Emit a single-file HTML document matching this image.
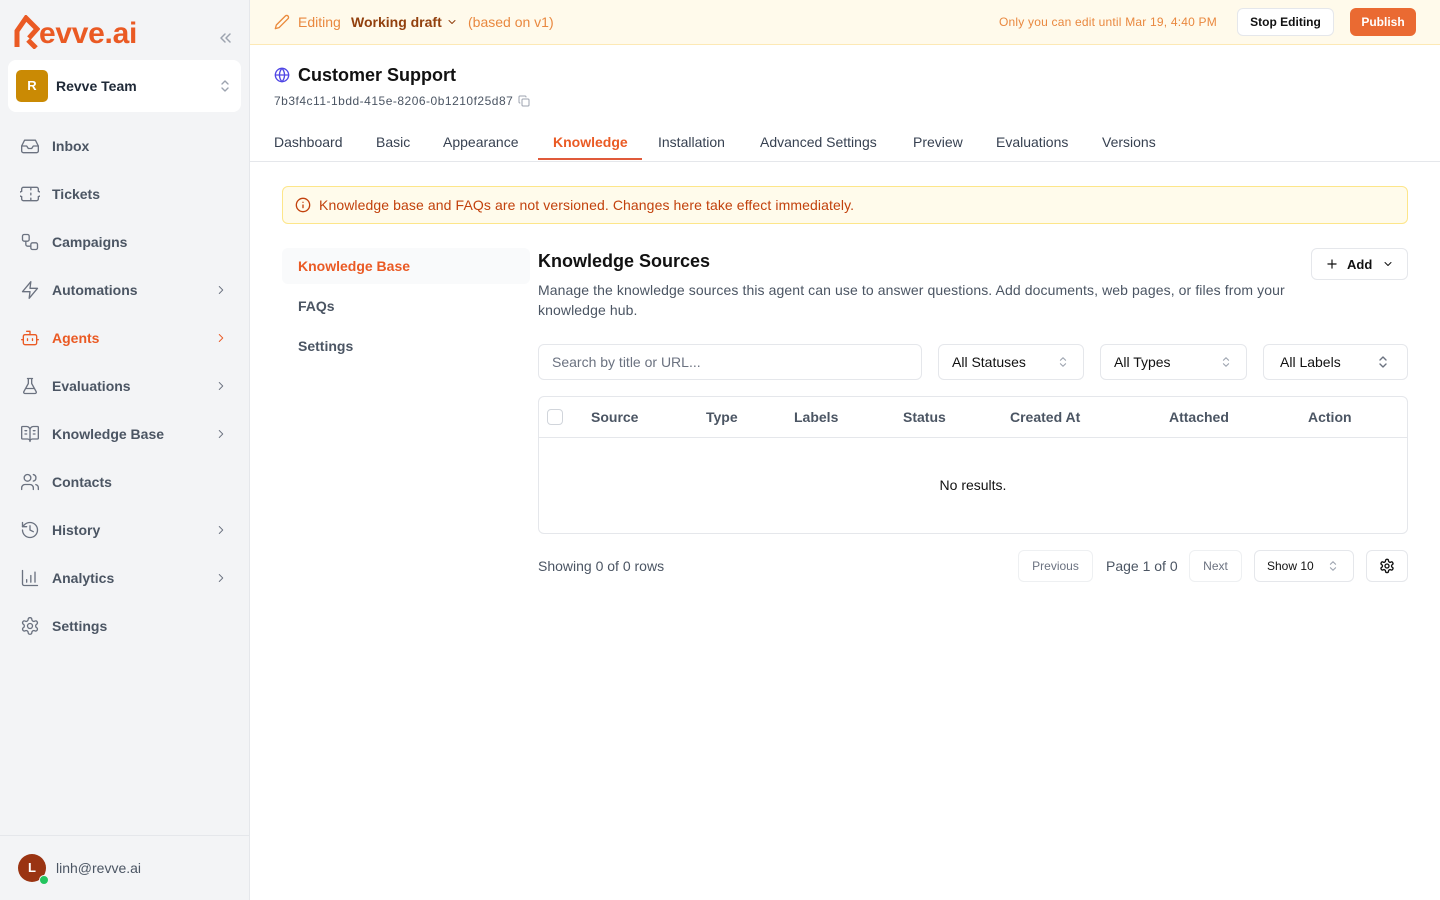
<!DOCTYPE html>
<html><head><meta charset="utf-8"><style>
*{box-sizing:border-box;margin:0;padding:0}
body{width:1440px;height:900px;overflow:hidden;font-family:"Liberation Sans",sans-serif;background:#fff;position:relative;color:#111827}
.a{position:absolute}
.sb{left:0;top:0;width:250px;height:900px;background:#f3f4f6;border-right:1px solid #e5e7eb}
.nav{left:20px;width:212px;height:24px;display:flex;align-items:center;font-size:14px;font-weight:bold;color:#4b5563}
.nav svg{width:20px;height:20px;margin-right:12px;fill:none;stroke:#6b7280;stroke-width:1.6;stroke-linecap:round;stroke-linejoin:round}
.nav .ch{position:absolute;right:4px;width:14px;height:14px;margin:0}
.tab{top:134px;font-size:14px;color:#374151}
.btn{border:1px solid #e5e7eb;border-radius:6px;background:#fff;display:flex;align-items:center;font-size:14px}
.th{top:409px;font-size:14px;color:#4b5563;font-weight:bold}
svg.i{fill:none;stroke-linecap:round;stroke-linejoin:round}
</style></head><body>
<div class="a sb"></div>
<div class="a" style="left:15px;top:17px;font-size:30px;font-weight:bold;color:#ea5a24;letter-spacing:-0.3px">
<span style="display:inline-block;width:24px"></span>evve.ai</div>
<svg class="a" style="left:14px;top:15px" width="26" height="34" viewBox="0 0 26 34"><path d="M3 32V16l9-13 11 11-8 9" fill="none" stroke="#ea5a24" stroke-width="5" stroke-linejoin="miter"/><path d="M14 25l8 8" stroke="#ea5a24" stroke-width="5"/></svg>
<svg class="a i" style="left:218px;top:31px" width="14" height="14" viewBox="0 0 14 14" stroke="#9ca3af" stroke-width="1.5"><path d="M7 3L3 7l4 4M12 3L8 7l4 4"/></svg>
<div class="a" style="left:8px;top:60px;width:233px;height:52px;background:#fff;border-radius:8px"></div>
<div class="a" style="left:16px;top:70px;width:32px;height:32px;background:#ca8a04;border-radius:5px;color:#fff;font-weight:bold;font-size:13px;text-align:center;line-height:32px">R</div>
<div class="a" style="left:56px;top:78px;font-size:14px;font-weight:bold;color:#1f2937">Revve Team</div>
<svg class="a i" style="left:218px;top:78px" width="14" height="16" viewBox="0 0 14 16" stroke="#9ca3af" stroke-width="1.4"><path d="M4 6l3-3 3 3M4 10l3 3 3-3"/></svg>

<div class="a nav" style="top:134px"><svg viewBox="0 0 24 24"><path d="M22 12h-6l-2 3h-4l-2-3H2"/><path d="M5.5 5h13L22 12v6a2 2 0 0 1-2 2H4a2 2 0 0 1-2-2v-6z"/></svg>Inbox</div>
<div class="a nav" style="top:182px"><svg viewBox="0 0 24 24"><path d="M2 9a3 3 0 0 0 0 6v3a2 2 0 0 0 2 2h16a2 2 0 0 0 2-2v-3a3 3 0 0 0 0-6V6a2 2 0 0 0-2-2H4a2 2 0 0 0-2 2z"/><path d="M13 5v2M13 11v2M13 17v2"/></svg>Tickets</div>
<div class="a nav" style="top:230px"><svg viewBox="0 0 24 24"><rect x="3" y="3" width="8" height="8" rx="2"/><rect x="13" y="13" width="8" height="8" rx="2"/><path d="M7 11v4a2 2 0 0 0 2 2h4"/></svg>Campaigns</div>
<div class="a nav" style="top:278px"><svg viewBox="0 0 24 24"><path d="M13 2L3 14h9l-1 8 10-12h-9z"/></svg>Automations<svg class="ch" viewBox="0 0 24 24"><path d="M9 6l6 6-6 6"/></svg></div>
<div class="a nav" style="top:326px;color:#ea5a24"><svg viewBox="0 0 24 24" style="stroke:#ea5a24"><path d="M12 8V4H8"/><rect x="4" y="8" width="16" height="12" rx="2"/><path d="M2 14h2M20 14h2M15 13v2M9 13v2"/></svg>Agents<svg class="ch" viewBox="0 0 24 24" style="stroke:#ea5a24"><path d="M9 6l6 6-6 6"/></svg></div>
<div class="a nav" style="top:374px"><svg viewBox="0 0 24 24"><path d="M9 3h6M10 3v6L4.5 19a1.5 1.5 0 0 0 1.3 2h12.4a1.5 1.5 0 0 0 1.3-2L14 9V3M7 15h10"/></svg>Evaluations<svg class="ch" viewBox="0 0 24 24"><path d="M9 6l6 6-6 6"/></svg></div>
<div class="a nav" style="top:422px"><svg viewBox="0 0 24 24"><path d="M12 7v14M3 18a1 1 0 0 1-1-1V4a1 1 0 0 1 1-1h5a4 4 0 0 1 4 4 4 4 0 0 1 4-4h5a1 1 0 0 1 1 1v13a1 1 0 0 1-1 1h-6a3 3 0 0 0-3 3 3 3 0 0 0-3-3z"/><path d="M16 8h2M16 12h2M6 8h2M6 12h2"/></svg>Knowledge Base<svg class="ch" viewBox="0 0 24 24"><path d="M9 6l6 6-6 6"/></svg></div>
<div class="a nav" style="top:470px"><svg viewBox="0 0 24 24"><path d="M16 21v-2a4 4 0 0 0-4-4H6a4 4 0 0 0-4 4v2"/><circle cx="9" cy="7" r="4"/><path d="M22 21v-2a4 4 0 0 0-3-3.9M16 3.1a4 4 0 0 1 0 7.8"/></svg>Contacts</div>
<div class="a nav" style="top:518px"><svg viewBox="0 0 24 24"><path d="M3 12a9 9 0 1 0 9-9 9.8 9.8 0 0 0-6.7 2.7L3 8"/><path d="M3 3v5h5M12 7v5l4 2"/></svg>History<svg class="ch" viewBox="0 0 24 24"><path d="M9 6l6 6-6 6"/></svg></div>
<div class="a nav" style="top:566px"><svg viewBox="0 0 24 24"><path d="M3 3v16a2 2 0 0 0 2 2h16M8 17v-3M13 17V9M18 17V5"/></svg>Analytics<svg class="ch" viewBox="0 0 24 24"><path d="M9 6l6 6-6 6"/></svg></div>
<div class="a nav" style="top:614px"><svg viewBox="0 0 24 24"><path d="M12.2 2h-.4a2 2 0 0 0-2 2v.2a2 2 0 0 1-1 1.7l-.4.3a2 2 0 0 1-2 0l-.2-.1a2 2 0 0 0-2.7.7l-.2.4a2 2 0 0 0 .7 2.7l.2.1a2 2 0 0 1 1 1.7v.5a2 2 0 0 1-1 1.7l-.2.1a2 2 0 0 0-.7 2.7l.2.4a2 2 0 0 0 2.7.7l.2-.1a2 2 0 0 1 2 0l.4.3a2 2 0 0 1 1 1.7v.2a2 2 0 0 0 2 2h.4a2 2 0 0 0 2-2v-.2a2 2 0 0 1 1-1.7l.4-.3a2 2 0 0 1 2 0l.2.1a2 2 0 0 0 2.7-.7l.2-.4a2 2 0 0 0-.7-2.7l-.2-.1a2 2 0 0 1-1-1.7v-.5a2 2 0 0 1 1-1.7l.2-.1a2 2 0 0 0 .7-2.7l-.2-.4a2 2 0 0 0-2.7-.7l-.2.1a2 2 0 0 1-2 0l-.4-.3a2 2 0 0 1-1-1.7V4a2 2 0 0 0-2-2z"/><circle cx="12" cy="12" r="3"/></svg>Settings</div>

<div class="a" style="left:0;top:835px;width:249px;border-top:1px solid #e5e7eb"></div>
<div class="a" style="left:18px;top:854px;width:28px;height:28px;border-radius:50%;background:#9a3412;color:#fff;font-weight:bold;font-size:13px;text-align:center;line-height:28px">L</div>
<div class="a" style="left:39px;top:875px;width:10px;height:10px;border-radius:50%;background:#22c55e;border:1.5px solid #f3f4f6"></div>
<div class="a" style="left:56px;top:860px;font-size:14px;color:#4b5563">linh@revve.ai</div>

<div class="a" style="left:250px;top:0;width:1190px;height:45px;background:#fffaeb;border-bottom:1px solid #fde9b5"></div>
<svg class="a i" style="left:274px;top:14px" width="16" height="16" viewBox="0 0 24 24" stroke="#ea8a3c" stroke-width="2"><path d="M17 3a2.8 2.8 0 1 1 4 4L7.5 20.5 2 22l1.5-5.5z"/></svg>
<div class="a" style="left:298px;top:14px;font-size:14px;color:#e9883f">Editing</div>
<div class="a" style="left:351px;top:14px;font-size:14px;color:#92400e;font-weight:bold">Working draft</div>
<svg class="a i" style="left:446px;top:16px" width="12" height="12" viewBox="0 0 24 24" stroke="#92400e" stroke-width="2"><path d="M6 9l6 6 6-6"/></svg>
<div class="a" style="left:468px;top:14px;font-size:14px;color:#e9883f">(based on v1)</div>
<div class="a" style="left:999px;top:15px;font-size:12px;color:#e9883f;letter-spacing:0.2px">Only you can edit until Mar 19, 4:40 PM</div>
<div class="a btn" style="left:1237px;top:8px;width:97px;height:28px;justify-content:center;font-size:12px;font-weight:bold;color:#111">Stop Editing</div>
<div class="a" style="left:1350px;top:8px;width:66px;height:28px;border-radius:6px;background:#ea6a32;color:#fff;font-size:12px;font-weight:bold;text-align:center;line-height:28px">Publish</div>

<svg class="a i" style="left:274px;top:67px" width="16" height="16" viewBox="0 0 24 24" stroke="#4f46e5" stroke-width="2"><circle cx="12" cy="12" r="10"/><path d="M2 12h20M12 2a15 15 0 0 1 0 20 15 15 0 0 1 0-20"/></svg>
<div class="a" style="left:298px;top:65px;font-size:18px;font-weight:bold;color:#111">Customer Support</div>
<div class="a" style="left:274px;top:94px;font-size:12px;color:#4b5563;letter-spacing:0.5px">7b3f4c11-1bdd-415e-8206-0b1210f25d87</div>
<svg class="a i" style="left:518px;top:95px" width="12" height="12" viewBox="0 0 24 24" stroke="#9ca3af" stroke-width="2"><rect x="8" y="8" width="14" height="14" rx="2"/><path d="M4 16a2 2 0 0 1-2-2V4a2 2 0 0 1 2-2h10a2 2 0 0 1 2 2"/></svg>

<div class="a tab" style="left:274px">Dashboard</div>
<div class="a tab" style="left:376px">Basic</div>
<div class="a tab" style="left:443px">Appearance</div>
<div class="a tab" style="left:553px;color:#ea5a24;font-weight:bold">Knowledge</div>
<div class="a tab" style="left:658px">Installation</div>
<div class="a tab" style="left:760px">Advanced Settings</div>
<div class="a tab" style="left:913px">Preview</div>
<div class="a tab" style="left:996px">Evaluations</div>
<div class="a tab" style="left:1102px">Versions</div>
<div class="a" style="left:250px;top:161px;width:1190px;border-top:1px solid #e5e7eb"></div>
<div class="a" style="left:538px;top:158px;width:104px;height:2px;background:#e05a3a"></div>

<div class="a" style="left:282px;top:186px;width:1126px;height:38px;background:#fffbeb;border:1px solid #fde68a;border-radius:6px"></div>
<svg class="a i" style="left:295px;top:197px" width="16" height="16" viewBox="0 0 24 24" stroke="#c2410c" stroke-width="2"><circle cx="12" cy="12" r="10"/><path d="M12 16v-4M12 8h.01"/></svg>
<div class="a" style="left:319px;top:197px;font-size:14px;color:#c2410c;letter-spacing:0.1px">Knowledge base and FAQs are not versioned. Changes here take effect immediately.</div>

<div class="a" style="left:282px;top:248px;width:248px;height:36px;background:#f9fafb;border-radius:6px"></div>
<div class="a" style="left:298px;top:258px;font-size:14px;color:#ea5a24;font-weight:bold">Knowledge Base</div>
<div class="a" style="left:298px;top:298px;font-size:14px;color:#4b5563;font-weight:bold">FAQs</div>
<div class="a" style="left:298px;top:338px;font-size:14px;color:#4b5563;font-weight:bold">Settings</div>

<div class="a" style="left:538px;top:251px;font-size:18px;font-weight:bold;color:#111">Knowledge Sources</div>
<div class="a" style="left:538px;top:280px;width:775px;font-size:14px;line-height:20px;color:#4b5563;letter-spacing:0.1px">Manage the knowledge sources this agent can use to answer questions. Add documents, web pages, or files from your knowledge hub.</div>
<div class="a btn" style="left:1311px;top:248px;width:97px;height:32px;font-size:13px;font-weight:bold;color:#111">
<svg class="i" style="margin-left:13px" width="14" height="14" viewBox="0 0 24 24" stroke="#111" stroke-width="2"><path d="M12 5v14M5 12h14"/></svg><span style="margin-left:8px">Add</span>
<svg class="i" style="margin-left:10px" width="12" height="12" viewBox="0 0 24 24" stroke="#111" stroke-width="2"><path d="M6 9l6 6 6-6"/></svg></div>

<div class="a btn" style="left:538px;top:344px;width:384px;height:36px;padding-left:13px;color:#6b7280">Search by title or URL...</div>
<div class="a btn" style="left:938px;top:344px;width:146px;height:36px;padding-left:13px;color:#111">All Statuses</div>
<div class="a btn" style="left:1100px;top:344px;width:147px;height:36px;padding-left:13px;color:#111">All Types</div>
<div class="a btn" style="left:1263px;top:344px;width:145px;height:36px;padding-left:16px;color:#111">All Labels</div>
<svg class="a i" style="left:1057px;top:355px" width="12" height="14" viewBox="0 0 14 16" stroke="#9ca3af" stroke-width="1.3"><path d="M4 6l3-3 3 3M4 10l3 3 3-3"/></svg>
<svg class="a i" style="left:1220px;top:355px" width="12" height="14" viewBox="0 0 14 16" stroke="#9ca3af" stroke-width="1.3"><path d="M4 6l3-3 3 3M4 10l3 3 3-3"/></svg>
<svg class="a i" style="left:1376px;top:354px" width="14" height="16" viewBox="0 0 14 16" stroke="#6b7280" stroke-width="1.4"><path d="M4 6l3-3 3 3M4 10l3 3 3-3"/></svg>

<div class="a" style="left:538px;top:396px;width:870px;height:138px;border:1px solid #e5e7eb;border-radius:6px"></div>
<div class="a" style="left:539px;top:437px;width:868px;border-top:1px solid #e5e7eb"></div>
<div class="a" style="left:547px;top:409px;width:16px;height:16px;border:1px solid #d1d5db;border-radius:4px"></div>
<div class="a th" style="left:591px">Source</div>
<div class="a th" style="left:706px">Type</div>
<div class="a th" style="left:794px">Labels</div>
<div class="a th" style="left:903px">Status</div>
<div class="a th" style="left:1010px">Created At</div>
<div class="a th" style="left:1169px">Attached</div>
<div class="a th" style="left:1308px">Action</div>
<div class="a" style="left:538px;top:477px;width:870px;text-align:center;font-size:14px;color:#111">No results.</div>

<div class="a" style="left:538px;top:558px;font-size:14px;color:#4b5563">Showing 0 of 0 rows</div>
<div class="a btn" style="left:1018px;top:550px;width:75px;height:32px;justify-content:center;font-size:12px;color:#6b7280;border-color:#eef0f2">Previous</div>
<div class="a" style="left:1106px;top:558px;font-size:14px;color:#4b5563">Page 1 of 0</div>
<div class="a btn" style="left:1189px;top:550px;width:53px;height:32px;justify-content:center;font-size:12px;color:#6b7280;border-color:#eef0f2">Next</div>
<div class="a btn" style="left:1254px;top:550px;width:100px;height:32px;padding-left:12px;font-size:12px;color:#111">Show 10</div>
<svg class="a i" style="left:1327px;top:559px" width="12" height="14" viewBox="0 0 14 16" stroke="#9ca3af" stroke-width="1.3"><path d="M4 6l3-3 3 3M4 10l3 3 3-3"/></svg>
<div class="a btn" style="left:1366px;top:550px;width:42px;height:32px;justify-content:center">
<svg class="i" width="16" height="16" viewBox="0 0 24 24" stroke="#111" stroke-width="2"><path d="M12.2 2h-.4a2 2 0 0 0-2 2v.2a2 2 0 0 1-1 1.7l-.4.3a2 2 0 0 1-2 0l-.2-.1a2 2 0 0 0-2.7.7l-.2.4a2 2 0 0 0 .7 2.7l.2.1a2 2 0 0 1 1 1.7v.5a2 2 0 0 1-1 1.700l-.2.1a2 2 0 0 0-.7 2.7l.2.4a2 2 0 0 0 2.7.7l.2-.1a2 2 0 0 1 2 0l.4.3a2 2 0 0 1 1 1.7v.2a2 2 0 0 0 2 2h.4a2 2 0 0 0 2-2v-.2a2 2 0 0 1 1-1.7l.4-.3a2 2 0 0 1 2 0l.2.1a2 2 0 0 0 2.7-.7l.2-.4a2 2 0 0 0-.7-2.7l-.2-.1a2 2 0 0 1-1-1.7v-.5a2 2 0 0 1 1-1.7l.2-.1a2 2 0 0 0 .7-2.7l-.2-.4a2 2 0 0 0-2.7-.7l-.2.1a2 2 0 0 1-2 0l-.4-.3a2 2 0 0 1-1-1.7V4a2 2 0 0 0-2-2z"/><circle cx="12" cy="12" r="3"/></svg></div>
</body></html>
